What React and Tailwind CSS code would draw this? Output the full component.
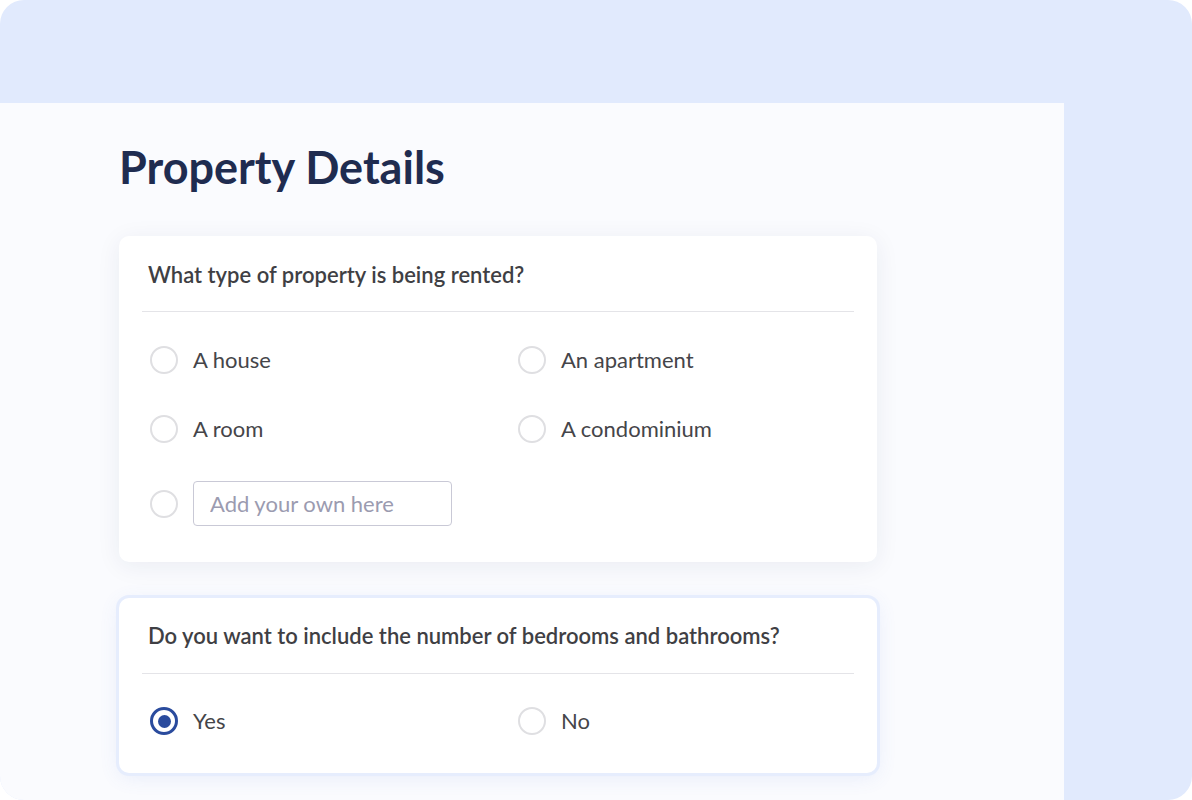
import { useState } from 'react';

const font = { fontFamily: 'Lato, "Noto Sans", sans-serif' };

function Radio({ checked }) {
  return (
    <span
      className={
        'flex h-[28px] w-[28px] shrink-0 items-center justify-center rounded-full bg-white ' +
        (checked ? 'border-[3px] border-[#2a4b9d]' : 'border-2 border-[#dfdfe2]')
      }
    >
      {checked && <span className="h-[13px] w-[13px] rounded-full bg-[#2a4b9d]" />}
    </span>
  );
}

function Option({ label, checked, onClick }) {
  return (
    <button type="button" onClick={onClick} className="flex h-[28px] items-center gap-[15px] text-left">
      <Radio checked={checked} />
      <span className="text-[22px] leading-[28px] text-[#454549]">{label}</span>
    </button>
  );
}

export default function App() {
  const [type, setType] = useState('');
  const [rooms, setRooms] = useState('yes');

  return (
    <div style={font} className="h-[800px] w-[1192px] overflow-hidden rounded-[24px] bg-[#e1eafd] pt-[103px]">
      <div className="h-full w-[1064px] bg-[#fafbfe] pl-[119px] pt-[40px]">
        <h1 className="text-[45px] font-bold leading-[48px] text-[#1f2c50]">Property Details</h1>

        {/* Property type */}
        <div className="mt-[45px] w-[758px] rounded-[10px] bg-white shadow-[0_4px_24px_rgba(30,40,90,0.07)]">
          <p className="px-[29px] pt-[25px] pb-[22px] text-[22px] font-semibold leading-[28px] text-[#3f3f44]">
            What type of property is being rented?
          </p>
          <div className="mx-[23px] border-t border-[#e4e4e8]" />
          <div className="px-[31px] pt-[34px] pb-[36px]">
            <div className="grid grid-cols-[368px_1fr] gap-y-[41px]">
              <Option label="A house" checked={type === 'house'} onClick={() => setType('house')} />
              <Option label="An apartment" checked={type === 'apartment'} onClick={() => setType('apartment')} />
              <Option label="A room" checked={type === 'room'} onClick={() => setType('room')} />
              <Option label="A condominium" checked={type === 'condo'} onClick={() => setType('condo')} />
            </div>
            <div className="mt-[38px] flex items-center gap-[15px]">
              <Radio checked={type === 'own'} />
              <input
                placeholder="Add your own here"
                onFocus={() => setType('own')}
                className="h-[45px] w-[259px] rounded-[4px] border border-[#c9c9d6] bg-white px-[16px] text-[22px] text-[#454549] outline-none placeholder:text-[#9b9bb0]"
              />
            </div>
          </div>
        </div>

        {/* Bedrooms */}
        <div className="mt-[36px] w-[758px] rounded-[10px] bg-white shadow-[0_4px_20px_rgba(90,120,220,0.12)] ring-[3px] ring-[#e6edfd]">
          <p className="px-[29px] pt-[24px] pb-[23px] text-[22px] font-semibold leading-[28px] text-[#3f3f44]">
            Do you want to include the number of bedrooms and bathrooms?
          </p>
          <div className="mx-[23px] border-t border-[#e4e4e8]" />
          <div className="grid grid-cols-[368px_1fr] px-[31px] pt-[33px] pb-[38px]">
            <Option label="Yes" checked={rooms === 'yes'} onClick={() => setRooms('yes')} />
            <Option label="No" checked={rooms === 'no'} onClick={() => setRooms('no')} />
          </div>
        </div>
      </div>
    </div>
  );
}
